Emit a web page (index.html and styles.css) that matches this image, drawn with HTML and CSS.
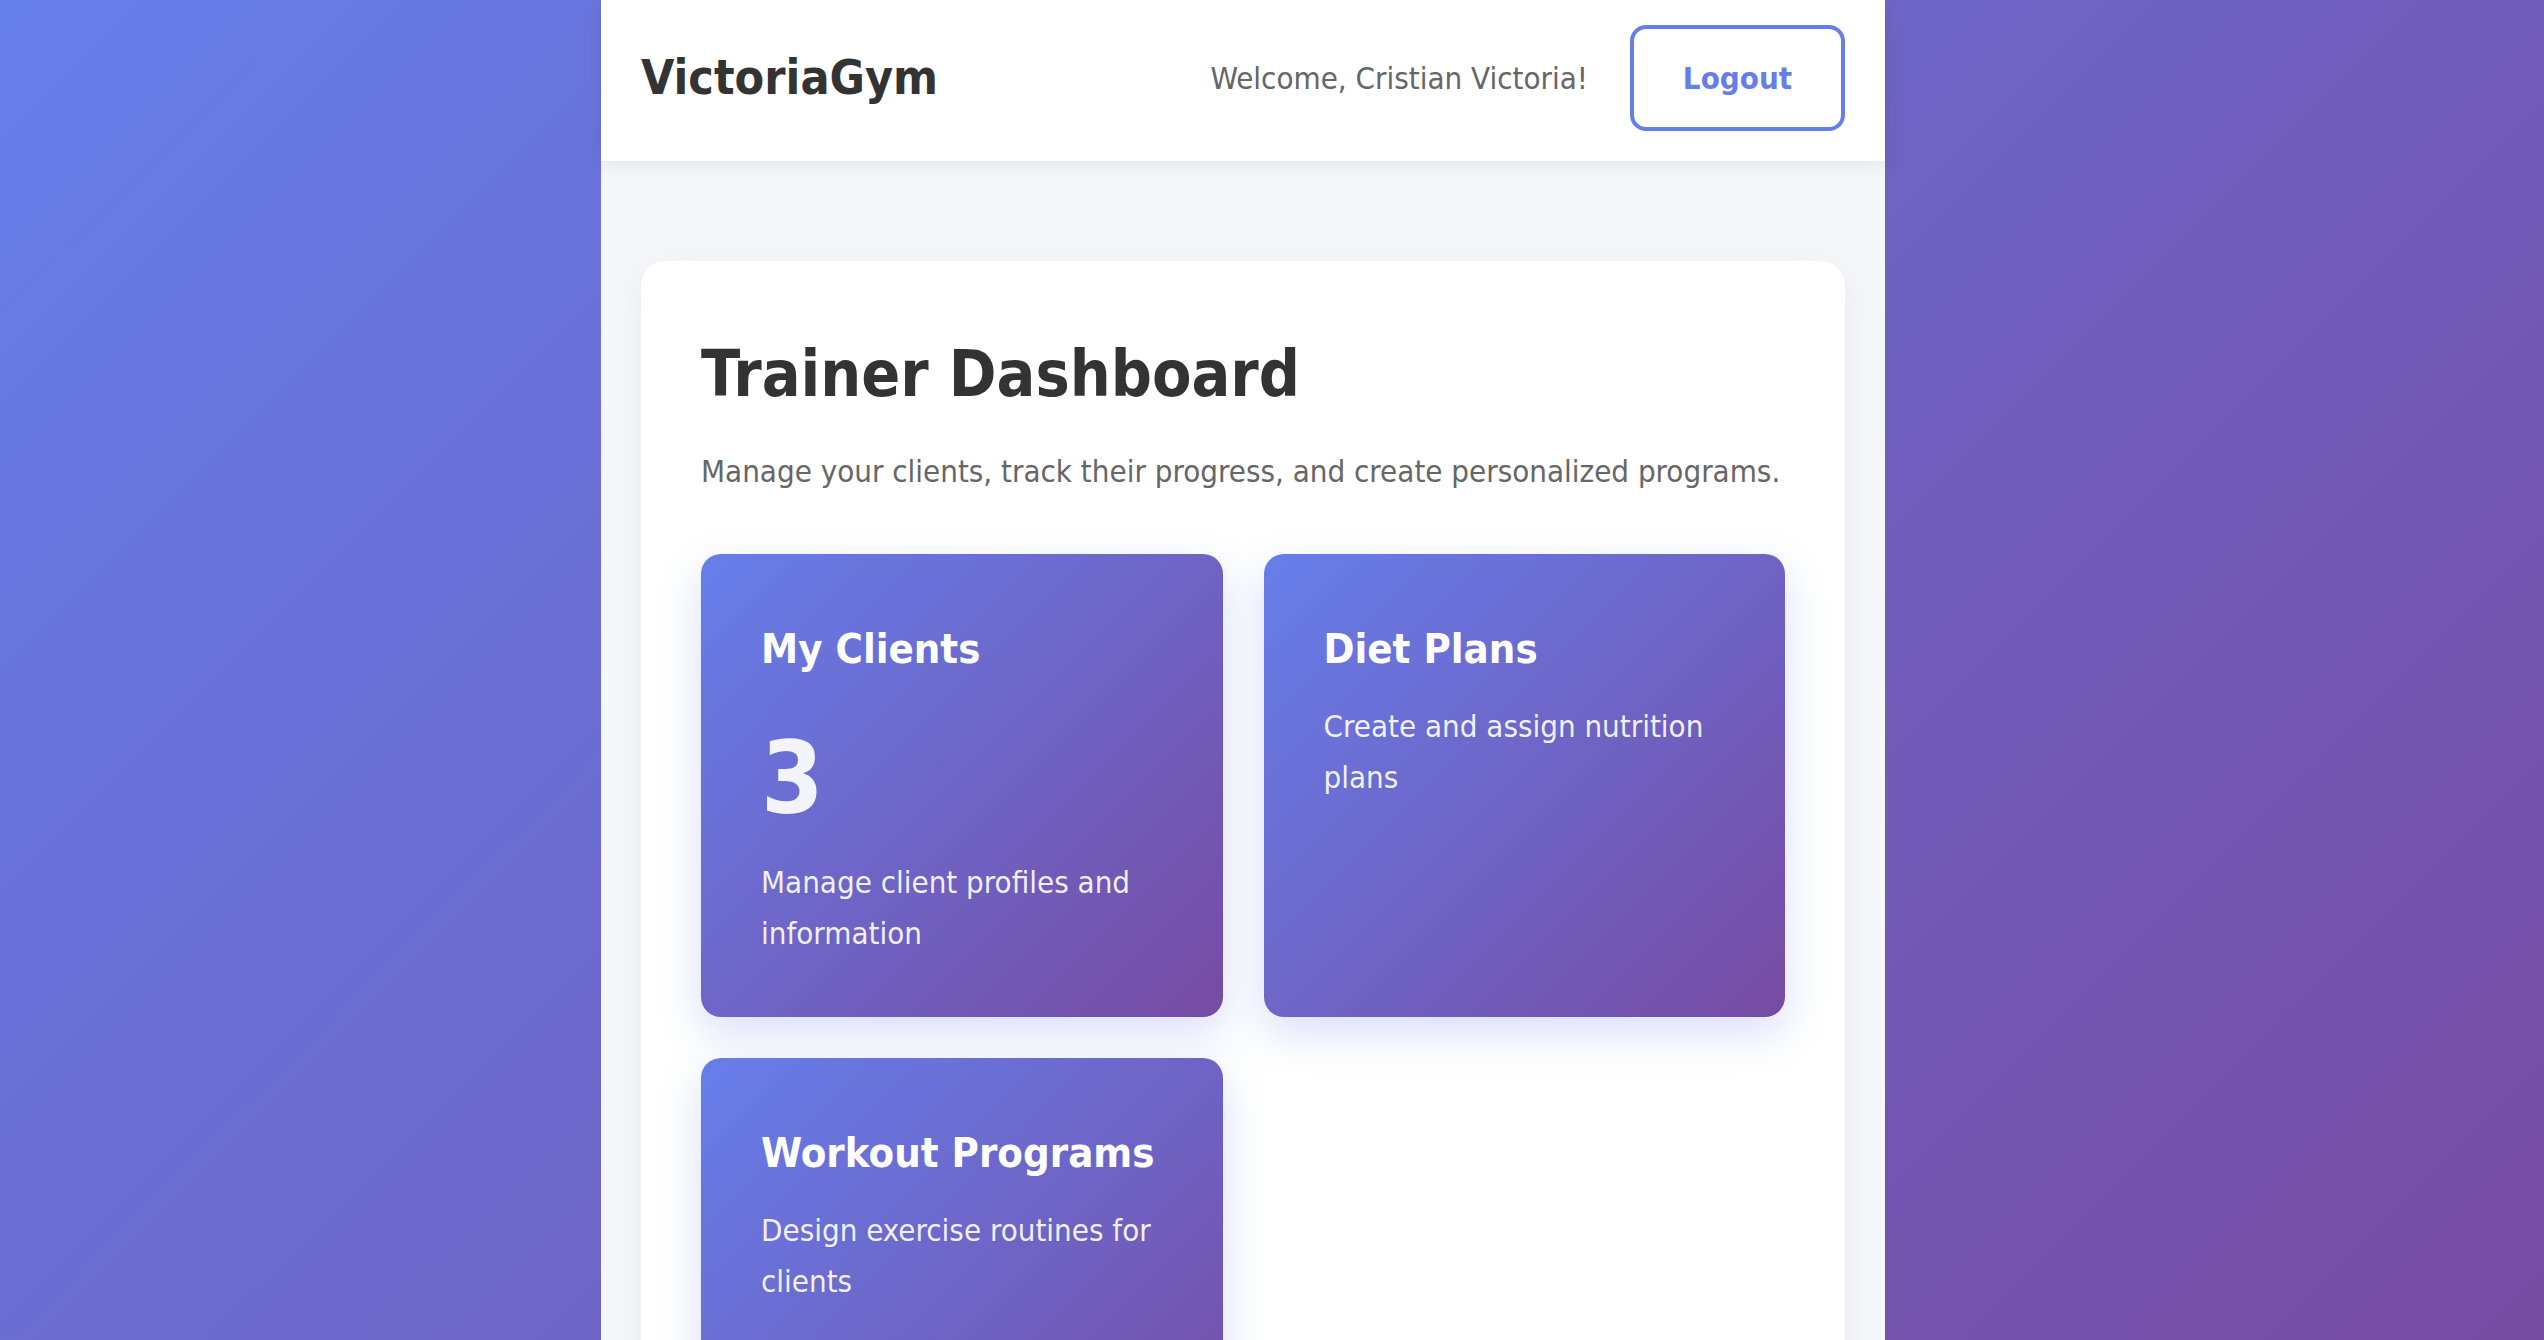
FILE: index.html
```html
<!DOCTYPE html>
<html lang="en">
<head>
<meta charset="utf-8">
<title>VictoriaGym - Trainer Dashboard</title>
<link rel="stylesheet" href="styles.css">
</head>
<body>
<div class="app">
  <header class="header">
    <div class="logo">VictoriaGym</div>
    <div class="user-area">
      <span class="welcome">Welcome, Cristian Victoria!</span>
      <button class="logout">Logout</button>
    </div>
  </header>
  <main class="main">
    <section class="dashboard">
      <h1 class="dash-title">Trainer Dashboard</h1>
      <p class="dash-subtitle">Manage your clients, track their progress, and create personalized programs.</p>
      <div class="cards">
        <div class="card">
          <h3 class="card-title">My Clients</h3>
          <div class="card-number">3</div>
          <p class="card-text">Manage client profiles and information</p>
        </div>
        <div class="card">
          <h3 class="card-title">Diet Plans</h3>
          <p class="card-text">Create and assign nutrition plans</p>
        </div>
        <div class="card">
          <h3 class="card-title">Workout Programs</h3>
          <p class="card-text">Design exercise routines for clients</p>
        </div>
      </div>
    </section>
  </main>
</div>
</body>
</html>
```
FILE: styles.css
```css
* { box-sizing: border-box; }

html, body { margin: 0; padding: 0; }

body {
  min-height: 100vh;
  display: flex;
  justify-content: center;
  padding-right: 58px;
  background: linear-gradient(135deg, #667eea 0%, #764ba2 100%) fixed;
  font-family: "DejaVu Sans Condensed", "DejaVu Sans", sans-serif;
  color: #333;
}

.app {
  width: 1284px;
  min-height: 100vh;
  background: #f5f7fa;
}

.header {
  display: flex;
  justify-content: space-between;
  align-items: center;
  padding: 25px 40px 30px;
  background: #fff;
  box-shadow: 0 4px 20px rgba(0, 0, 0, 0.08);
  position: relative;
}

.logo {
  font-size: 48px;
  font-weight: bold;
  color: #333;
  line-height: 1.2;
}

.user-area {
  display: flex;
  align-items: center;
  gap: 42px;
}

.welcome {
  font-size: 31px;
  color: #666;
}

.logout {
  width: 215px;
  height: 106px;
  border: 4px solid #667eea;
  border-radius: 16px;
  background: #fff;
  color: #667eea;
  font-family: inherit;
  font-size: 31px;
  font-weight: bold;
  padding: 0;
}

.main {
  padding: 100px 40px 0;
}

.dashboard {
  background: #fff;
  border-radius: 24px;
  padding: 73px 60px 60px;
  box-shadow: 0 8px 40px rgba(0, 0, 0, 0.06);
}

.dash-title {
  margin: 0 0 34px;
  font-size: 64px;
  line-height: 80px;
  font-weight: bold;
  color: #333;
}

.dash-subtitle {
  margin: 0 0 59px;
  font-size: 31px;
  line-height: 1.5;
  color: #666;
}

.cards {
  display: grid;
  grid-template-columns: 1fr 1fr;
  gap: 41px;
}

.card {
  background: linear-gradient(135deg, #667eea 0%, #764ba2 100%);
  border-radius: 20px;
  padding: 71px 60px 57px;
  color: #fff;
  min-height: 463px;
  box-shadow: 0 16px 40px rgba(102, 126, 234, 0.25);
}

.card-title {
  margin: 0 0 28px;
  font-size: 41.5px;
  line-height: 48px;
  font-weight: bold;
  color: #fff;
}

.card-number {
  margin: 56px 0 28px;
  font-size: 100px;
  line-height: 1;
  font-weight: bold;
  color: rgba(255, 255, 255, 0.92);
}

.card-text {
  margin: 0;
  font-size: 31px;
  line-height: 1.65;
  color: rgba(255, 255, 255, 0.92);
}
```
